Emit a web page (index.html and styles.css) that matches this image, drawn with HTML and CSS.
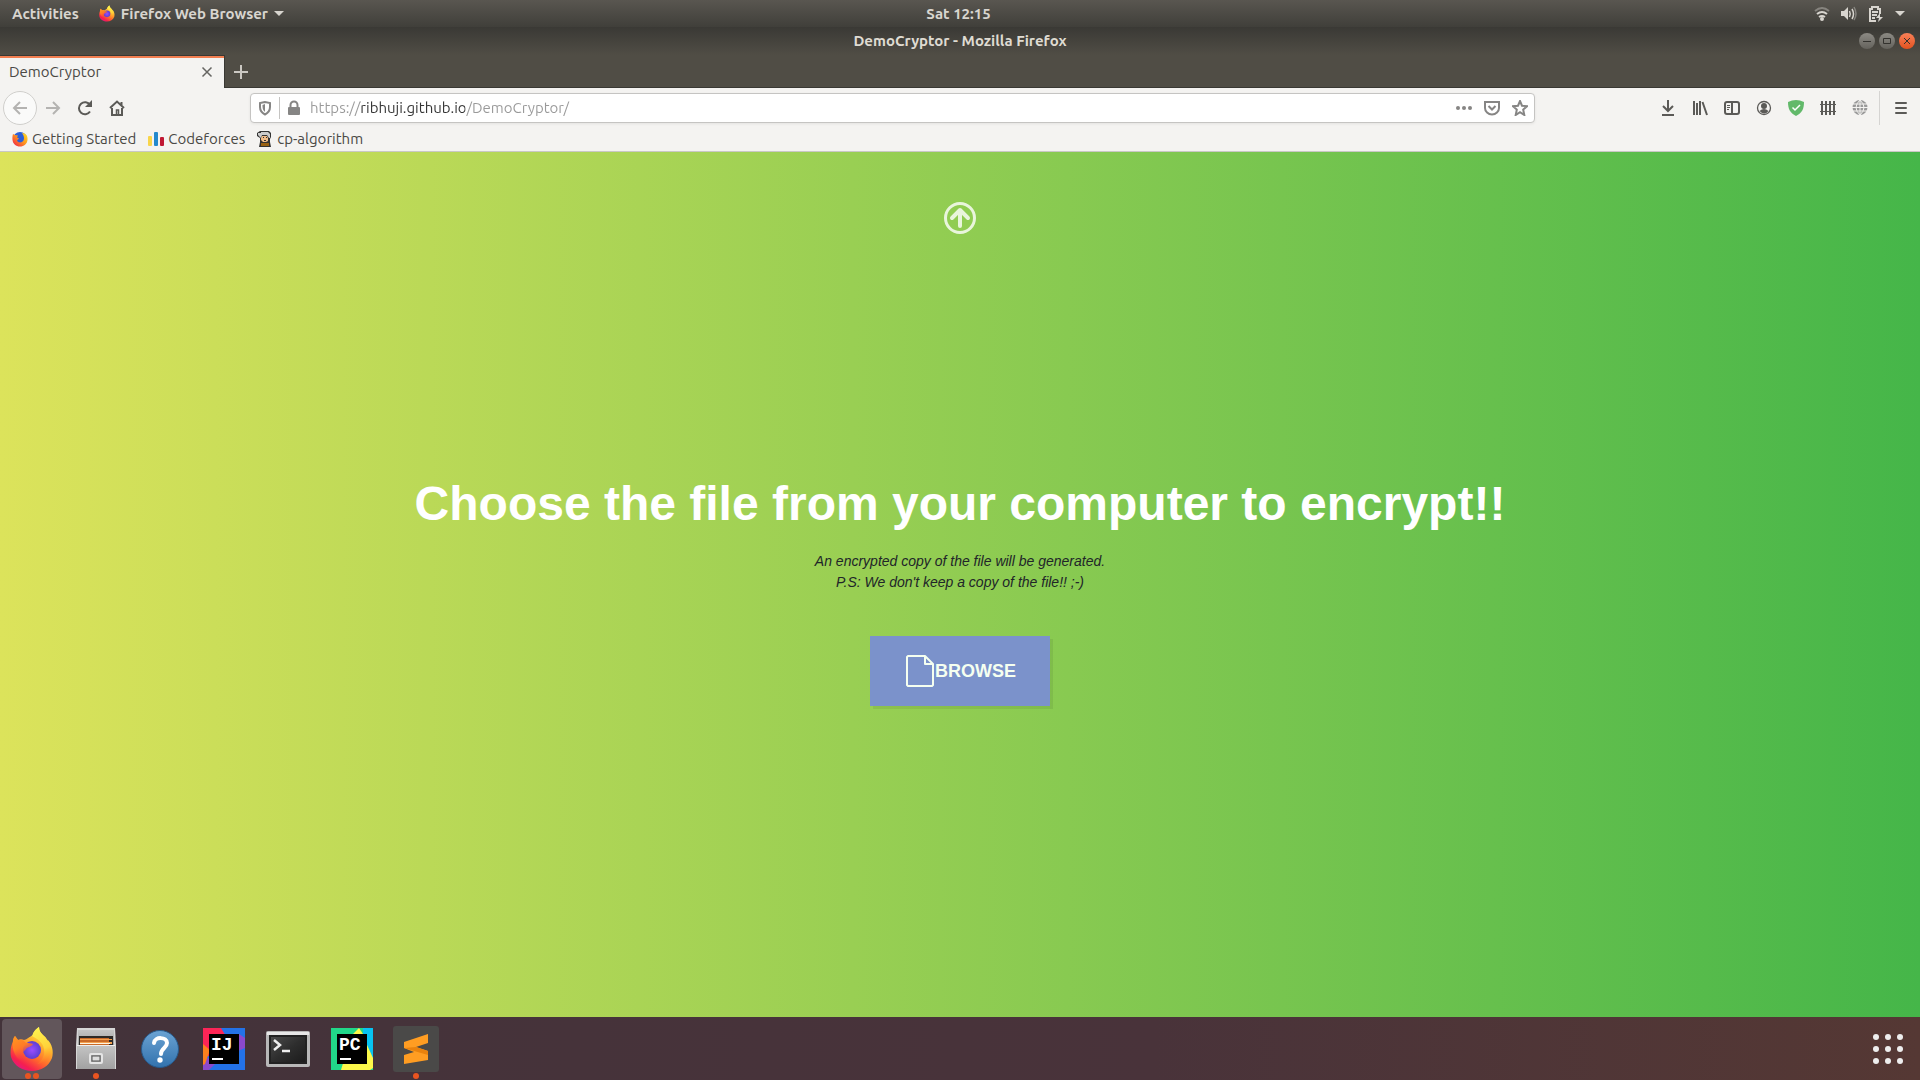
FILE: index.html
```html
<!DOCTYPE html>
<html lang="en">
<head>
<meta charset="utf-8">
<meta name="viewport" content="width=device-width, initial-scale=1">
<title>DemoCryptor</title>
<link rel="stylesheet" href="styles.css">
</head>
<body>
<svg class="defs" aria-hidden="true">
  <defs>
    <linearGradient id="ff-body" x1="0.8" y1="0.1" x2="0.25" y2="1"><stop offset="0" stop-color="#fff44f"/><stop offset=".3" stop-color="#ffb52e"/><stop offset=".6" stop-color="#ff6a2b"/><stop offset=".85" stop-color="#f5204f"/><stop offset="1" stop-color="#e31587"/></linearGradient>
    <linearGradient id="ff-flame" x1="0.4" y1="0" x2="0.6" y2="1"><stop offset="0" stop-color="#fff44f"/><stop offset=".6" stop-color="#ffd23a"/><stop offset="1" stop-color="#ff8a1e" stop-opacity="0"/></linearGradient>
    <linearGradient id="ff-head" x1="0" y1="0" x2="0.4" y2="1"><stop offset="0" stop-color="#ff9a1f"/><stop offset=".5" stop-color="#ff7a25"/><stop offset="1" stop-color="#fb3646" stop-opacity="0"/></linearGradient>
    <radialGradient id="ff-globe"><stop offset="0" stop-color="#9a4dff"/><stop offset="1" stop-color="#5b3fd1"/></radialGradient>
    <linearGradient id="cabinet" x1="0" y1="0" x2="0" y2="1"><stop offset="0" stop-color="#c4c4c4"/><stop offset="1" stop-color="#a2a2a2"/></linearGradient>
    <linearGradient id="help" x1="0" y1="0" x2="0" y2="1"><stop offset="0" stop-color="#6ba3d3"/><stop offset="1" stop-color="#3272ad"/></linearGradient>
    <linearGradient id="screen" x1="0" y1="0" x2="1" y2="1"><stop offset="0" stop-color="#4a4a4a"/><stop offset=".5" stop-color="#2e2e2e"/><stop offset="1" stop-color="#1c1c1c"/></linearGradient>
    <linearGradient id="ff-ring" x1="1" y1="0" x2="0" y2="1"><stop offset="0" stop-color="#ffe226"/><stop offset=".45" stop-color="#ff9a1c"/><stop offset="1" stop-color="#f0134d"/></linearGradient>
    <symbol id="firefox" viewBox="0 0 44 46">
      <path fill="url(#ff-body)" d="M5 10c1 1 2 3 3 4 2-1 4-1 6 0 2 0 5-3 9-5C23 6 26 3 29 1c0 4 2 6 5 9 2 1 3 4 4 6 0-1 0-2-1-3 5 5 7 12 5 19-3 8-11 13-20 13S4 40 1 31C0 25 1 19 3 16c0-2 0-4 2-6z"/>
      <path fill="url(#ff-flame)" d="M22 10c1-4 4-7 7-9 0 4 2 6 5 9 6 6 8 12 5 20-3 6-8 8-12 8 6-4 8-9 7-15-1-6-6-10-12-13z"/>
      <circle cx="22" cy="24" r="9" fill="url(#ff-globe)"/>
      <path fill="url(#ff-head)" d="M5 10c1 1 2 3 3 4 3-1 6 0 8 3 2 0 5 0 7 1-1 3-6 3-7 5-2 3-4 3-4 5 1 5 6 7 10 7-8 3-15-1-18-9-2-5-2-12 1-16z"/>
    </symbol>
  </defs>
</svg>

<header class="system-bar">
  <nav class="system-left">
    <button type="button" class="plain">Activities</button>
    <button type="button" class="plain app-menu"><svg width="16" height="17"><use href="#firefox"/></svg>Firefox Web Browser<svg width="10" height="6" viewBox="0 0 10 6"><path fill="currentColor" d="M0 0h10L5 5z"/></svg></button>
  </nav>
  <time class="clock">Sat 12:15</time>
  <button type="button" class="plain system-status" aria-label="System menu">
    <svg width="16" height="16" viewBox="0 0 16 16" fill="none" stroke="currentColor" stroke-width="2"><path opacity=".4" d="M1 5q7-6 14 0"/><path d="M3 8q5-4 10 0M5 11q3-2 6 0"/><circle cx="8" cy="13" r="1"/></svg>
    <svg width="16" height="16" viewBox="0 0 16 16" fill="none" stroke="currentColor" stroke-width="2"><path fill="currentColor" stroke="none" d="M0 5h3l4-4v13l-4-4H0z"/><path stroke-width="1.5" d="M8.500 5q1.500 3 0 6M11 3q3 5 0 10"/><path opacity=".4" stroke-width="1.500" d="M13 1q4 7 0 13"/></svg>
    <svg width="16" height="18" viewBox="0 0 16 18" fill="none" stroke="currentColor" stroke-width="2"><path d="M8 16H2V4h2V2h6v2h2v5M4 7h6M4 10h5M4 13h3"/><path fill="currentColor" stroke="none" d="M12 8l-4 5h3l-1 4 5-5h-3z"/></svg>
    <svg width="10" height="6" viewBox="0 0 10 6"><path fill="currentColor" d="M0 0h10L5 5z"/></svg>
  </button>
</header>

<div class="title-bar">
  <span class="window-title">DemoCryptor - Mozilla Firefox</span>
  <div class="window-buttons">
    <button type="button" aria-label="Minimize"><svg width="16" height="16" viewBox="0 0 16 16"><path d="M4 8.500h8"/></svg></button>
    <button type="button" aria-label="Maximize"><svg width="16" height="16" viewBox="0 0 16 16"><path d="M4.500 5.500h7v5h-7z"/></svg></button>
    <button type="button" class="close" aria-label="Close"><svg width="16" height="16" viewBox="0 0 16 16"><path d="M5 5l6 6M11 5l-6 6"/></svg></button>
  </div>
</div>

<div class="tab-strip">
  <div class="tab"><span>DemoCryptor</span><button type="button" class="plain" aria-label="Close tab"><svg width="12" height="12" viewBox="0 0 12 12"><path fill="none" stroke="#666562" stroke-width="1.500" d="M1.500 1.500l9 9M10.500 1.500l-9 9"/></svg></button></div>
  <button type="button" class="plain new-tab" aria-label="New tab"><svg width="14" height="14" viewBox="0 0 14 14"><path stroke="currentColor" stroke-width="2" d="M7 0v14M0 7h14"/></svg></button>
</div>

<div class="toolbar">
  <div class="nav-buttons">
    <button type="button" class="back" aria-label="Back"><svg class="icon" viewBox="0 0 16 16"><path d="M15 8H2M8 2L2 8l6 6"/></svg></button>
    <button type="button" class="plain forward" aria-label="Forward"><svg class="icon" viewBox="0 0 16 16"><path d="M1 8h13M8 2l6 6-6 6"/></svg></button>
    <button type="button" class="plain" aria-label="Reload"><svg class="icon" viewBox="0 0 16 16"><path d="M13 11.500A6 6 0 1 1 13 5"/><path class="solid" d="M15 0v7H8z"/></svg></button>
    <button type="button" class="plain" aria-label="Home"><svg class="icon" viewBox="0 0 16 16"><path d="M1 8l7-6.500L15 8M3 8v7h10V8M12.500 2v4"/><path d="M7.500 14v-4h2v4" stroke-width="1.500"/></svg></button>
  </div>
  <div class="url-bar">
    <svg class="icon shield" viewBox="0 0 16 16"><path d="M8 2L3 3v4c0 4 2 6 5 7.500C11 13 13 11 13 7V3z"/><path class="solid" d="M8 4v8C6 10 5.500 9 5.500 5z"/></svg>
    <span class="url-divider"></span>
    <svg class="icon" viewBox="0 0 16 16"><path d="M4.500 8V5a3.500 3.500 0 0 1 7 0v3"/><rect class="solid" x="2" y="7" width="12" height="8" rx="1"/></svg>
    <input class="url" type="text" aria-label="Address" value="https://ribhuji.github.io/DemoCryptor/" spellcheck="false">
    <div class="url-actions">
      <button type="button" class="plain" aria-label="Page actions"><svg class="icon" viewBox="0 0 16 16"><g class="solid"><circle cx="2" cy="8" r="2"/><circle cx="8" cy="8" r="2"/><circle cx="14" cy="8" r="2"/></g></svg></button>
      <button type="button" class="plain" aria-label="Save to Pocket"><svg class="icon" viewBox="0 0 16 16"><path d="M1 2h14v6a7 6.500 0 0 1-14 0zM4.500 6L8 9.500 11.500 6"/></svg></button>
      <button type="button" class="plain" aria-label="Bookmark page"><svg class="icon" viewBox="0 0 16 16"><path d="M8 1l2 4.700 5 .5-3.800 3.400L12.300 15 8 12.200 3.700 15l1.100-5.400L1 6.200l5-.5z"/></svg></button>
    </div>
  </div>
  <div class="tool-buttons">
    <button type="button" class="plain" aria-label="Downloads"><svg class="icon" viewBox="0 0 16 16"><path d="M8 0v11M3 6l5 5 5-5M2 15h12"/></svg></button>
    <button type="button" class="plain" aria-label="Library"><svg class="icon" viewBox="0 0 16 16"><path d="M2 1v14M5 3v12M8 1v14M10.500 2L15 15"/></svg></button>
    <button type="button" class="plain" aria-label="Sidebars"><svg class="icon" viewBox="0 0 16 16"><rect x="1" y="2" width="14" height="12" rx="2"/><path d="M8 2v12"/><path stroke-width="1" d="M3 5.500h3M3 7.500h3M3 9.500h2"/></svg></button>
    <button type="button" class="plain" aria-label="Account"><svg class="icon" viewBox="0 0 16 16"><circle cx="8" cy="8" r="6.500" stroke-width="1.300"/><circle class="solid" cx="8" cy="6" r="3"/><path class="solid" d="M3.500 11q4.500-4 9 0-4 5-9 0z"/></svg></button>
    <button type="button" class="plain guard" aria-label="Ad blocker"><svg class="icon" viewBox="0 0 16 16"><path class="solid" d="M8 0q4 0 8 2c0 7-2 11-8 14C2 13 0 9 0 2q4-2 8-2z"/><path stroke="#fff" stroke-width="1.500" d="M4.500 7.500L7 10l5-5"/></svg></button>
    <button type="button" class="plain" aria-label="Containers"><svg class="icon" viewBox="0 0 16 16"><path d="M2 1v14M6 1v14M10 1v14M14 1v14"/><path stroke-width="1" d="M0 4.500h16M0 11.500h16"/></svg></button>
    <button type="button" class="plain globe" aria-label="Network"><svg class="icon" viewBox="0 0 16 16"><circle class="solid" cx="8" cy="7.500" r="7.500"/><path stroke="#f4f3f1" stroke-width="1" d="M8 0v15M1 4h14M0 7.500h16M1 11h14M8 0Q0 7.500 8 15M8 0q8 7.500 0 15"/></svg></button>
    <span class="tool-divider"></span>
    <button type="button" class="plain" aria-label="Menu"><svg class="icon" viewBox="0 0 16 16"><path stroke-linecap="round" d="M3 3h10M3 8h10M3 13h10"/></svg></button>
  </div>
</div>

<nav class="bookmarks">
  <a href="#"><svg width="16" height="16" viewBox="0 0 16 16"><circle cx="8" cy="8" r="7" fill="#2b5fd9"/><path fill="url(#ff-ring)" d="M1 3l2 1 3 .5-1 2 2 1-2 2c1 2.500 5 2.500 6.500 0 1-2 .500-5-1.500-7.500C14 2 16 5 15.500 9 15 13 12 15.500 8 15.500S1 13 .5 9C.3 6 .5 5 1 3z"/></svg>Getting Started</a>
  <a href="#"><svg width="16" height="16" viewBox="0 0 16 16"><rect y="5" width="4" height="10" rx="1" fill="#f8d54a"/><rect x="6" y="1" width="4" height="14" rx="1" fill="#2389cd"/><rect x="12" y="6" width="4" height="9" rx="1" fill="#c01833"/></svg>Codeforces</a>
  <a href="#"><svg width="16" height="16" viewBox="0 0 16 16"><path fill="#333" d="M3 0h9l2 2v4l-1 2v3l1 5H2l1-5V7L0 5V2z"/><path fill="#ccc" d="M4 1h7l2 2v4h-1L10 4H5L4 7 1 4V2h3z"/><path fill="#f2bd88" d="M5 5h5l1 2v3l-2 1H6L4 9V7z"/><path fill="#333" d="M6 6h1v1H6zM9 6h1v1H9zM7 9h2v1H7z"/><path fill="#996112" d="M4 12h8v3H4z"/></svg>cp-algorithm</a>
</nav>

<main class="page">
  <a href="#" class="upload-link" aria-label="Encrypt"><svg width="32" height="32" viewBox="0 0 32 32"><circle cx="16" cy="16" r="14.500" fill="none" stroke="currentColor" stroke-width="3"/><path fill="none" stroke="currentColor" stroke-width="4" stroke-linecap="round" stroke-linejoin="round" d="M16 24V8M8 16l8-8 8 8"/></svg></a>
  <section class="hero">
    <h1>Choose the file from your computer to encrypt!!</h1>
    <p>An encrypted copy of the file will be generated.<br>P.S: We don't keep a copy of the file!! ;-)</p>
    <button type="button" class="browse"><svg width="28" height="32" viewBox="0 0 28 32"><path fill="none" stroke="currentColor" stroke-width="2" stroke-linejoin="round" d="M2 1h17l8 8v21l-1 1H2l-1-1V2zM19 1v8h8"/></svg>BROWSE</button>
  </section>
</main>

<nav class="dock">
  <button type="button" class="launcher active" aria-label="Firefox"><svg width="44" height="46"><use href="#firefox"/></svg><i class="dots"><b></b><b></b></i></button>
  <button type="button" class="launcher" aria-label="Files"><svg width="40" height="42" viewBox="0 0 40 42"><path fill="#d6d6d6" d="M1 0h38l1 17v24H0V17z"/><path fill="url(#cabinet)" d="M2 2h36v15H2z"/><path fill="#2d2926" d="M3 8h34v9H3z"/><path fill="#c96a28" d="M4 10h29v7H4z"/><path fill="#f4a04f" d="M4 11h32v1H4zM4 14h32v2H4z"/><path fill="#fff3df" d="M4 15h30v1H4z"/><path fill="url(#cabinet)" d="M1 17h38v24H1z"/><path fill="#eee" d="M1 17h38v1H1z"/><rect x="14" y="26" width="12" height="9" rx="1" fill="#aaa" stroke="#e5e5e5" stroke-width="2"/><rect x="16" y="28" width="8" height="5" fill="#ddd" stroke="#555"/></svg><i class="dots"><b></b></i></button>
  <button type="button" class="launcher" aria-label="Help"><svg width="40" height="40" viewBox="0 0 40 40"><circle cx="20" cy="20" r="18.500" fill="url(#help)" stroke="#275a8c"/><path fill="none" stroke="#fff" stroke-width="4" stroke-linecap="round" d="M14 14c1-7 13-6 13 0 0 5-6 5-6 11"/><circle cx="20" cy="31" r="2.700" fill="#fff"/></svg></button>
  <button type="button" class="launcher" aria-label="IntelliJ IDEA"><svg width="42" height="42" viewBox="0 0 42 42"><path fill="#2372e8" d="M0 0h42v42H0z"/><path fill="#fc2557" d="M0 0h18l6 10L8 30 0 24z"/><path fill="#8b49cc" d="M42 10v10L28 26l8-20zM0 28l14 6-8 8H0z"/><path fill="#fc801d" d="M0 16l7 6-5 14-2 1z"/><path d="M6 6h30v30H6z"/><text class="logo-text" x="8" y="22">IJ</text><path fill="#fff" d="M9 30h11v2H9z"/></svg></button>
  <button type="button" class="launcher" aria-label="Terminal"><svg width="44" height="36" viewBox="0 0 44 36"><rect width="44" height="36" rx="2" fill="#b8b8b8"/><path fill="#e7e7e7" d="M1 1h42v3H1z"/><path fill="#222" d="M3 4h38v29H3z"/><path fill="url(#screen)" d="M5 6h34v25H5z"/><path fill="none" stroke="#eee" stroke-width="2.500" d="M8 9l6 5-6 5M16 20h8"/></svg></button>
  <button type="button" class="launcher" aria-label="PyCharm"><svg width="42" height="42" viewBox="0 0 42 42"><path fill="#21d789" d="M0 0h42v42H0z"/><path fill="#fcf84a" d="M20 8l8-8 4 6 10 20v14l-3 2H10z"/><path fill="#07c3f2" d="M32 0h10v30L32 8z"/><path d="M6 6h30v30H6z"/><text class="logo-text" x="8" y="22">PC</text><path fill="#fff" d="M9 30h11v2H9z"/></svg></button>
  <button type="button" class="launcher" aria-label="Sublime Text"><svg width="46" height="46" viewBox="0 0 46 46"><rect width="46" height="46" rx="3" fill="#4a4948"/><path fill="#ff9d22" d="M11 16l24-8v9l-12 4 12 4v9l-24 4v-9l10-3-10-4z"/><path fill="#e9820d" d="M11 22l12-1 12 4v4z"/></svg><i class="dots"><b></b></i></button>
  <button type="button" class="launcher show-apps" aria-label="Show Applications"><svg width="30" height="30" viewBox="0 0 30 30" fill="#eee"><circle cx="3" cy="3" r="3"/><circle cx="15" cy="3" r="3"/><circle cx="27" cy="3" r="3"/><circle cx="3" cy="15" r="3"/><circle cx="15" cy="15" r="3"/><circle cx="27" cy="15" r="3"/><circle cx="3" cy="27" r="3"/><circle cx="15" cy="27" r="3"/><circle cx="27" cy="27" r="3"/></svg></button>
</nav>
</body>
</html>
```
FILE: styles.css
```css
* { box-sizing: border-box; }

body {
  margin: 0;
  min-height: 100vh;
  display: flex;
  flex-direction: column;
  font: 15px/20px Ubuntu, "Noto Sans", sans-serif;
  color: #4a4945;
  background: #f4f3f1;
}

button { font: inherit; color: inherit; cursor: pointer; }
svg { display: block; flex: none; }
.defs { position: absolute; width: 0; height: 0; }

.plain {
  display: flex;
  align-items: center;
  justify-content: center;
  padding: 0;
  border: 0;
  background: none;
}

.icon {
  width: 16px;
  height: 16px;
  fill: none;
  stroke: currentColor;
  stroke-width: 2;
}
.icon .solid { fill: currentColor; stroke: none; }

/* Desktop bar */
.system-bar {
  display: grid;
  grid-template-columns: 1fr auto 1fr;
  align-items: center;
  height: 27px;
  padding: 0 15px 0 12px;
  font-weight: 600;
  color: #d8d5cf;
  background: linear-gradient(#595650, #403f3a);
}
.system-left { display: flex; gap: 20px; }
.app-menu { gap: 6px; }
.system-status { gap: 11px; justify-self: end; }

/* Window title */
.title-bar {
  display: grid;
  grid-template-columns: 1fr auto 1fr;
  align-items: center;
  height: 28px;
  padding: 0 5px;
  font-weight: 600;
  color: #dfdbd2;
  background: linear-gradient(#3a3935, #504d45);
}
.window-title { grid-column: 2; }
.window-buttons { display: flex; gap: 4px; justify-self: end; }
.window-buttons button {
  width: 16px;
  height: 16px;
  padding: 0;
  border: 0;
  border-radius: 50%;
  color: #33322e;
  background: linear-gradient(#8c8a84, #64625c);
}
.window-buttons .close { background: linear-gradient(#f98058, #e2521f); }
.window-buttons path { fill: none; stroke: currentColor; }

/* Tabs */
.tab-strip {
  display: flex;
  height: 33px;
  background: #504d45;
  box-shadow: inset 0 -1px #393833;
}
.tab {
  display: flex;
  align-items: center;
  justify-content: space-between;
  width: 225px;
  padding: 0 11px 0 9px;
  background: #f4f3f1;
  border-top: 1px solid #393833;
  border-right: 1px solid #393833;
  box-shadow: inset 0 2px #f27e50;
}
.new-tab { width: 32px; color: #cbc8c2; }

/* Toolbar */
.toolbar {
  display: flex;
  align-items: center;
  height: 40px;
  color: #5b5a57;
}
.nav-buttons { display: flex; align-items: center; width: 250px; padding-left: 3px; }
.nav-buttons .plain { width: 32px; height: 32px; }
.nav-buttons .back {
  display: grid;
  place-items: center;
  width: 34px;
  height: 34px;
  padding: 0;
  border: 1px solid #d0cfcc;
  border-radius: 50%;
  color: #b4b3b1;
  background: #fafaf9;
}
.nav-buttons .forward { color: #b4b3b1; }

.url-bar {
  display: flex;
  flex: 1;
  align-items: center;
  gap: 6px;
  height: 30px;
  padding: 0 6px;
  color: #868584;
  background: #fff;
  border: 1px solid #c5c4c2;
  border-radius: 4px;
  box-shadow: 0 1px 3px #0001;
}
.url-divider { width: 1px; height: 22px; background: #c5c4c2; }
.url {
  flex: 1;
  min-width: 0;
  padding: 0 0 0 2px;
  border: 0;
  outline: 0;
  font: inherit;
  color: transparent;
  /* dims the scheme and the path, keeps the host dark */
  background: linear-gradient(90deg, #999 52px, #333 52px 157px, #999 157px);
  background-clip: text;
}
.url-actions { display: flex; gap: 12px; }

.tool-buttons {
  display: flex;
  align-items: center;
  justify-content: flex-end;
  width: 385px;
  padding-right: 3px;
}
.tool-buttons .plain { width: 32px; height: 32px; }
.tool-buttons .guard { color: #62b96a; }
.tool-buttons .globe { color: #999; }
.tool-divider { width: 1px; height: 34px; margin: 0 5px 0 3px; background: #d5d4d2; }

.bookmarks {
  display: flex;
  align-items: center;
  gap: 12px;
  height: 24px;
  padding: 0 12px 1px;
  border-bottom: 1px solid #c9c8c5;
}
.bookmarks a {
  display: flex;
  align-items: center;
  gap: 4px;
  color: inherit;
  text-decoration: none;
}

/* Web page */
.page {
  flex: 1;
  display: grid;
  grid-template-rows: 1fr auto 1fr;
  justify-items: center;
  font-family: "Liberation Sans", Arial, sans-serif;
  background: linear-gradient(90deg, #dce35b, #45b649);
}
.upload-link { align-self: start; padding-top: 50px; color: #ffffffcc; }
.hero { padding-top: 11px; text-align: center; color: #212529; }
.hero h1 {
  margin: 0;
  font-size: 48px;
  line-height: 58px;
  color: #fff;
}
.hero p {
  margin: 18px 0 43px;
  font-size: 14px;
  line-height: 21px;
  font-style: italic;
}
.browse {
  display: flex;
  align-items: center;
  justify-content: center;
  gap: 1px;
  width: 180px;
  height: 70px;
  margin: 0 auto;
  padding: 0 0 0 2px;
  border: 0;
  font-size: 18px;
  font-weight: 700;
  color: #f5fff0;
  background: #7b92cb;
  box-shadow: 3px 3px #0001;
}

/* Dock */
.dock {
  display: flex;
  align-items: center;
  gap: 4px;
  height: 63px;
  padding: 0 2px;
  background: linear-gradient(90deg, #43333a, #49333a 60%, #553834);
}
.launcher {
  position: relative;
  display: grid;
  place-items: center;
  width: 60px;
  height: 60px;
  padding: 0;
  border: 0;
  border-radius: 4px;
  background: none;
}
.launcher.active { background: #62565b; }
.show-apps { margin-left: auto; }
.dots {
  position: absolute;
  inset: auto 0 0;
  display: flex;
  justify-content: center;
  gap: 2px;
}
.dots b { width: 6px; height: 6px; border-radius: 50%; background: #e95420; }
.logo-text { font: bold 18px "Liberation Mono", monospace; fill: #fff; }
```
